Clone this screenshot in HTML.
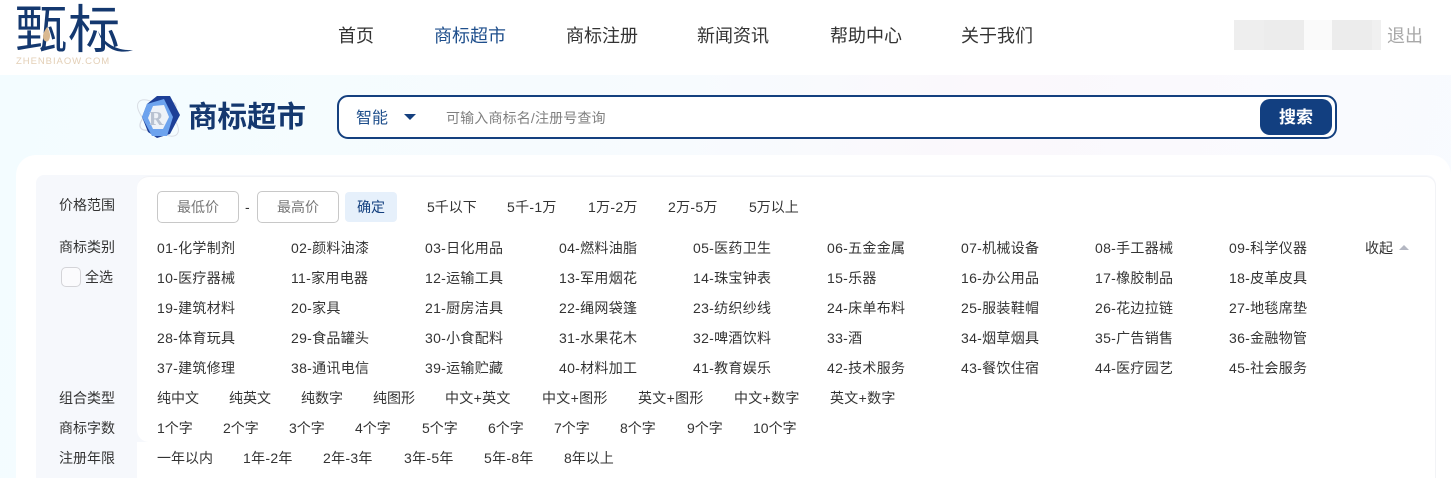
<!DOCTYPE html>
<html lang="zh"><head><meta charset="utf-8"><title>商标超市</title>
<style>
html,body{margin:0;padding:0}
body{width:1451px;height:478px;overflow:hidden;position:relative;background:#fff;font-family:"Liberation Sans","Noto Sans CJK SC",sans-serif;color:#333}
.a{position:absolute;white-space:nowrap}
.nav{top:24px;font-size:18px;line-height:24px;color:#333}
.hero{left:0;top:75px;width:1451px;height:403px;background:linear-gradient(100deg,#f3fcff 0%,#f7fbfe 45%,#fbf8fc 65%,#f8fbff 100%)}
.card{left:16px;top:155px;width:1435px;height:340px;background:#fff;border-radius:20px 20px 0 0}
.box{left:36px;top:175px;width:1400px;height:303px;background:#f6f8fc;border-radius:8px 10px 0 0}
.panel{left:137px;top:176px;width:1299px;height:266px;background:#fff;border-radius:12px 10px 0 12px;border:1px solid #f2f3f6;border-left:0;border-bottom:0;box-sizing:border-box}
.panel2{left:137px;top:442px;width:1299px;height:36px;background:#fff;border-right:1px solid #f2f3f6;box-sizing:border-box}
.t{font-size:14px;line-height:18px;color:#333}
.n{letter-spacing:.3px}
.l{left:59px;font-size:14px;line-height:18px;color:#333}
.inp{top:191px;width:82px;height:32px;box-sizing:border-box;border:1px solid #c8c8c8;border-radius:5px;background:#fff;font-size:14px;line-height:31px;text-align:center;color:#777}
</style></head><body>

<div class="a" style="left:15px;top:0;font-size:52px;line-height:62px;color:#14386f;letter-spacing:1px;font-weight:400">甄标</div>
<svg class="a" style="left:90px;top:30px" width="50" height="24" viewBox="0 0 50 24"><path d="M8 1C14 13 26 21 43 20 32 24 14 22 8 1Z" fill="#14386f"/></svg>
<svg class="a" style="left:42px;top:27px" width="10" height="17" viewBox="0 0 10 17"><path d="M5 0C8 5 9 9 7 13 5 16 1 14 1 10 1 6 3 3 5 0Z" fill="#d9b88f"/></svg>
<div class="a" style="left:16px;top:56px;font-size:9.5px;line-height:12px;letter-spacing:.95px;color:#e3cfb6">ZHENBIAOW.COM</div>

<div class="a nav" style="left:338px">首页</div>
<div class="a nav" style="left:434px;color:#1f4f8c">商标超市</div>
<div class="a nav" style="left:566px">商标注册</div>
<div class="a nav" style="left:697px">新闻资讯</div>
<div class="a nav" style="left:830px">帮助中心</div>
<div class="a nav" style="left:961px">关于我们</div>

<div class="a" style="left:1234px;top:20px;width:30px;height:30px;background:#eeeeee"></div>
<div class="a" style="left:1264px;top:20px;width:40px;height:30px;background:#ececec"></div>
<div class="a" style="left:1304px;top:20px;width:28px;height:30px;background:#fafafa"></div>
<div class="a" style="left:1332px;top:20px;width:40px;height:30px;background:#ececec"></div>
<div class="a" style="left:1372px;top:20px;width:9px;height:30px;background:#f0f0f0"></div>
<div class="a" style="left:1387px;top:24px;font-size:18px;line-height:24px;color:#a8a8a8">退出</div>

<div class="a hero"></div>

<svg class="a" style="left:134px;top:92px" width="50" height="50" viewBox="0 0 50 50">
<ellipse cx="24" cy="26" rx="25" ry="11" transform="rotate(40 24 26)" fill="none" stroke="#d9dde4" stroke-width="1"/>
<ellipse cx="24" cy="24" rx="21" ry="9" transform="rotate(-35 24 24)" fill="none" stroke="#d5d9e2" stroke-width="1.2"/>
<path d="M23 4H36L46 23 36 42 23 46 14 40 8 25 13 12Z" fill="#1d3f97"/>
<path d="M13 12L30 7 39 25 33 44 18 44 8 25Z" fill="#6da3ee"/>
<path d="M19 14L30 13 35 25 29 37 19 37 14 26Z" fill="#eef2f8"/>
<text x="15" y="33" font-family="Liberation Serif,serif" font-size="20" font-weight="700" fill="#b9c2d1">R</text>
</svg>
<div class="a" style="left:188px;top:97px;font-size:29.5px;line-height:42px;font-weight:700;color:#14386f">商标超市</div>

<div class="a" style="left:337px;top:95px;width:1000px;height:44px;box-sizing:border-box;border:2px solid #14407f;border-radius:11px;background:#fff"></div>
<div class="a" style="left:356px;top:108px;font-size:16px;line-height:22px;color:#1f4f8c">智能</div>
<div class="a" style="left:404px;top:114px;width:0;height:0;border-left:6px solid transparent;border-right:6px solid transparent;border-top:6px solid #14407f"></div>
<div class="a" style="left:446px;top:108px;font-size:14px;line-height:20px;letter-spacing:.15px;color:#808080">可输入商标名/注册号查询</div>
<div class="a" style="left:1260px;top:99px;width:72px;height:36px;border-radius:10px;background:#123f80;color:#fff;font-size:17px;font-weight:700;line-height:37px;text-align:center">搜索</div>

<div class="a card"></div>
<div class="a box"></div>
<div class="a panel"></div>
<div class="a panel2"></div>

<div class="a l" style="top:196px">价格范围</div>
<div class="a inp" style="left:157px">最低价</div>
<div class="a t" style="left:245px;top:198px">-</div>
<div class="a inp" style="left:257px">最高价</div>
<div class="a" style="left:345px;top:192px;width:52px;height:30px;border-radius:4px;background:#e6f0fb;color:#14407f;font-size:14px;line-height:31px;text-align:center">确定</div>
<div class="a t" style="left:427px;top:198px">5千以下</div>
<div class="a t n" style="left:507px;top:198px">5千-1万</div>
<div class="a t n" style="left:588px;top:198px">1万-2万</div>
<div class="a t n" style="left:668px;top:198px">2万-5万</div>
<div class="a t" style="left:749px;top:198px">5万以上</div>

<div class="a l" style="top:238px">商标类别</div>
<div class="a" style="left:61px;top:267px;width:20px;height:20px;box-sizing:border-box;border:1px solid #d4d4d8;border-radius:5px;background:#fbfbfd"></div>
<div class="a t" style="left:85px;top:268px">全选</div>

<div class="a t n" style="left:157px;top:239px">01-化学制剂</div>
<div class="a t n" style="left:291px;top:239px">02-颜料油漆</div>
<div class="a t n" style="left:425px;top:239px">03-日化用品</div>
<div class="a t n" style="left:559px;top:239px">04-燃料油脂</div>
<div class="a t n" style="left:693px;top:239px">05-医药卫生</div>
<div class="a t n" style="left:827px;top:239px">06-五金金属</div>
<div class="a t n" style="left:961px;top:239px">07-机械设备</div>
<div class="a t n" style="left:1095px;top:239px">08-手工器械</div>
<div class="a t n" style="left:1229px;top:239px">09-科学仪器</div>
<div class="a t" style="left:1365px;top:239px">收起</div>
<div class="a" style="left:1399px;top:245px;width:0;height:0;border-left:5px solid transparent;border-right:5px solid transparent;border-bottom:5px solid #b4b7c2"></div>

<div class="a t n" style="left:157px;top:269px">10-医疗器械</div>
<div class="a t n" style="left:291px;top:269px">11-家用电器</div>
<div class="a t n" style="left:425px;top:269px">12-运输工具</div>
<div class="a t n" style="left:559px;top:269px">13-军用烟花</div>
<div class="a t n" style="left:693px;top:269px">14-珠宝钟表</div>
<div class="a t n" style="left:827px;top:269px">15-乐器</div>
<div class="a t n" style="left:961px;top:269px">16-办公用品</div>
<div class="a t n" style="left:1095px;top:269px">17-橡胶制品</div>
<div class="a t n" style="left:1229px;top:269px">18-皮革皮具</div>

<div class="a t n" style="left:157px;top:299px">19-建筑材料</div>
<div class="a t n" style="left:291px;top:299px">20-家具</div>
<div class="a t n" style="left:425px;top:299px">21-厨房洁具</div>
<div class="a t n" style="left:559px;top:299px">22-绳网袋篷</div>
<div class="a t n" style="left:693px;top:299px">23-纺织纱线</div>
<div class="a t n" style="left:827px;top:299px">24-床单布料</div>
<div class="a t n" style="left:961px;top:299px">25-服装鞋帽</div>
<div class="a t n" style="left:1095px;top:299px">26-花边拉链</div>
<div class="a t n" style="left:1229px;top:299px">27-地毯席垫</div>

<div class="a t n" style="left:157px;top:329px">28-体育玩具</div>
<div class="a t n" style="left:291px;top:329px">29-食品罐头</div>
<div class="a t n" style="left:425px;top:329px">30-小食配料</div>
<div class="a t n" style="left:559px;top:329px">31-水果花木</div>
<div class="a t n" style="left:693px;top:329px">32-啤酒饮料</div>
<div class="a t n" style="left:827px;top:329px">33-酒</div>
<div class="a t n" style="left:961px;top:329px">34-烟草烟具</div>
<div class="a t n" style="left:1095px;top:329px">35-广告销售</div>
<div class="a t n" style="left:1229px;top:329px">36-金融物管</div>

<div class="a t n" style="left:157px;top:359px">37-建筑修理</div>
<div class="a t n" style="left:291px;top:359px">38-通讯电信</div>
<div class="a t n" style="left:425px;top:359px">39-运输贮藏</div>
<div class="a t n" style="left:559px;top:359px">40-材料加工</div>
<div class="a t n" style="left:693px;top:359px">41-教育娱乐</div>
<div class="a t n" style="left:827px;top:359px">42-技术服务</div>
<div class="a t n" style="left:961px;top:359px">43-餐饮住宿</div>
<div class="a t n" style="left:1095px;top:359px">44-医疗园艺</div>
<div class="a t n" style="left:1229px;top:359px">45-社会服务</div>

<div class="a l" style="top:389px">组合类型</div>
<div class="a t" style="left:157px;top:389px">纯中文</div>
<div class="a t" style="left:229px;top:389px">纯英文</div>
<div class="a t" style="left:301px;top:389px">纯数字</div>
<div class="a t" style="left:373px;top:389px">纯图形</div>
<div class="a t n" style="left:445px;top:389px">中文+英文</div>
<div class="a t n" style="left:542px;top:389px">中文+图形</div>
<div class="a t n" style="left:638px;top:389px">英文+图形</div>
<div class="a t n" style="left:734px;top:389px">中文+数字</div>
<div class="a t n" style="left:830px;top:389px">英文+数字</div>

<div class="a l" style="top:419px">商标字数</div>
<div class="a t" style="left:157px;top:419px">1个字</div>
<div class="a t" style="left:223px;top:419px">2个字</div>
<div class="a t" style="left:289px;top:419px">3个字</div>
<div class="a t" style="left:355px;top:419px">4个字</div>
<div class="a t" style="left:422px;top:419px">5个字</div>
<div class="a t" style="left:488px;top:419px">6个字</div>
<div class="a t" style="left:554px;top:419px">7个字</div>
<div class="a t" style="left:620px;top:419px">8个字</div>
<div class="a t" style="left:687px;top:419px">9个字</div>
<div class="a t" style="left:753px;top:419px">10个字</div>

<div class="a l" style="top:449px">注册年限</div>
<div class="a t" style="left:157px;top:449px">一年以内</div>
<div class="a t n" style="left:243px;top:449px">1年-2年</div>
<div class="a t n" style="left:323px;top:449px">2年-3年</div>
<div class="a t n" style="left:404px;top:449px">3年-5年</div>
<div class="a t n" style="left:484px;top:449px">5年-8年</div>
<div class="a t" style="left:564px;top:449px">8年以上</div>

</body></html>
